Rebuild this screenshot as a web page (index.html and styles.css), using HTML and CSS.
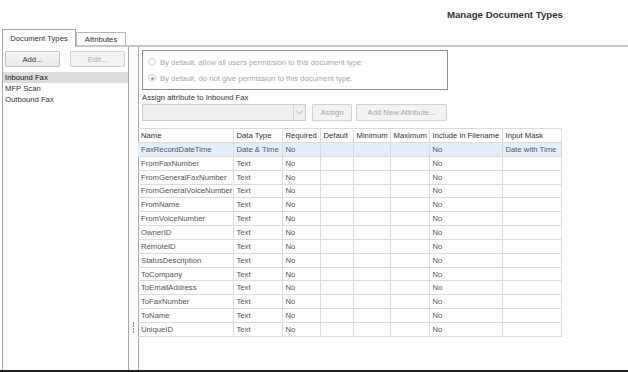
FILE: index.html
```html
<!DOCTYPE html>
<html lang="en">
<head>
  <meta charset="UTF-8" />
  <title>Manage Document Types</title>
  <meta name="viewport" content="width=device-width, initial-scale=1.0" />
  <link rel="stylesheet" href="styles.css">
</head>
<body>
  <div class="page">
    <div class="titlebar">
      <h1>Manage Document Types</h1>
    </div>

    <div class="tabs">
      <div class="tab active">Document Types</div>
      <div class="tab">Attributes</div>
      <div class="tab-rest"></div>
    </div>

    <div class="main">
      <div class="left-panel">
        <div class="left-buttons">
          <button class="btn">Add...</button>
          <button class="btn" disabled>Edit...</button>
        </div>
        <ul class="doc-list">
          <li class="selected">Inbound Fax</li>
          <li>MFP Scan</li>
          <li>Outbound Fax</li>
        </ul>
      </div>

      <div class="splitter">
        <div class="grip"><span></span><span></span><span></span><span></span></div>
      </div>

      <div class="right-panel">
        <div class="perm-box">
          <label class="radio-row"><span class="radio"></span>By default, allow all users permission to this document type</label>
          <label class="radio-row"><span class="radio checked"></span>By default, do not give permission to this document type.</label>
        </div>

        <div class="assign-label">Assign attribute to Inbound Fax</div>
        <div class="assign-row">
          <div class="combo">
            <div class="combo-text"></div>
            <div class="combo-arrow">
              <svg width="7" height="5" viewBox="0 0 7 5"><path d="M0.5 0.8 L3.5 3.8 L6.5 0.8" fill="none" stroke="#b4b4b4" stroke-width="1"/></svg>
            </div>
          </div>
          <button class="btn assign" disabled>Assign</button>
          <button class="btn add-new" disabled>Add New Attribute...</button>
        </div>

        <table class="grid">
          <colgroup>
            <col style="width:95px"><col style="width:49px"><col style="width:38px"><col style="width:33px">
            <col style="width:37px"><col style="width:39px"><col style="width:73px"><col style="width:59px">
          </colgroup>
          <thead>
            <tr>
              <th>Name</th><th>Data Type</th><th>Required</th><th>Default</th>
              <th>Minimum</th><th>Maximum</th><th>Include in Filename</th><th>Input Mask</th>
            </tr>
          </thead>
          <tbody id="gridBody"></tbody>
        </table>
      </div>
    </div>
    <div class="bottom-bar"></div>
  </div>

  <script>
    const attributes = [
      ["FaxRecordDateTime", "Date & Time", "Date with Time"],
      ["FromFaxNumber", "Text", ""],
      ["FromGeneralFaxNumber", "Text", ""],
      ["FromGeneralVoiceNumber", "Text", ""],
      ["FromName", "Text", ""],
      ["FromVoiceNumber", "Text", ""],
      ["OwnerID", "Text", ""],
      ["RemoteID", "Text", ""],
      ["StatusDescription", "Text", ""],
      ["ToCompany", "Text", ""],
      ["ToEmailAddress", "Text", ""],
      ["ToFaxNumber", "Text", ""],
      ["ToName", "Text", ""],
      ["UniqueID", "Text", ""]
    ];

    const body = document.getElementById("gridBody");
    attributes.forEach((a, i) => {
      const tr = document.createElement("tr");
      if (i === 0) tr.className = "selected";
      tr.innerHTML = `
        <td>${a[0].replace("&", "&amp;")}</td>
        <td>${a[1].replace("&", "&amp;")}</td>
        <td>No</td><td></td><td></td><td></td>
        <td>No</td>
        <td>${a[2]}</td>`;
      body.appendChild(tr);
    });
  </script>
</body>
</html>
```

FILE: styles.css
```css
* { box-sizing: border-box; }
html, body { margin: 0; padding: 0; background: #fff; }
body {
  font-family: "Liberation Sans", Arial, sans-serif;
  font-size: 7.7px; color: #444;
}
.page { width: 628px; height: 372px; display: flex; flex-direction: column; overflow: hidden; }

.titlebar {
  height: 29px; display: flex; justify-content: flex-end; align-items: center;
  padding-right: 65px; padding-bottom: 0;
}
.titlebar h1 { margin: 0; font-size: 9.7px; font-weight: bold; color: #333; }

.tabs { display: flex; align-items: flex-end; height: 18px; padding-left: 2px; }
.tab {
  height: 15px; padding: 0 7px; display: flex; align-items: center;
  border: 1px solid #b9b9b9; border-bottom: 2px solid #c8c8c8;
  background: #fff; color: #333; width: 50px; justify-content: center;
}
.tab.active {
  height: 18px; width: 74px; border-color: #a8a8a8; border-bottom: none;
  padding-bottom: 1px;
}
.tab-rest { flex: 1; border-bottom: 2px solid #c8c8c8; height: 2px; }

.main { flex: 1; display: flex; min-height: 0; }

.left-panel {
  margin-left: 2px; width: 127px;
  border-left: 1px solid #a9a9a9; border-right: 1px solid #a9a9a9;
  display: flex; flex-direction: column;
}
.left-buttons { display: flex; gap: 10px; padding: 4px 0 0 2px; height: 25px; }

.btn {
  font-family: inherit; font-size: 7.7px; color: #333;
  background: linear-gradient(#f6f6f6, #e9e9e9);
  border: 1px solid #c4c4c4; border-radius: 1px;
  height: 16px; padding: 0; margin: 0;
}
.btn:disabled { color: #a8a8a8; background: #f3f3f3; border-color: #d2d2d2; }
.left-buttons .btn { width: 55px; }

.doc-list { list-style: none; margin: 0; padding: 0; }
.doc-list li { height: 11px; line-height: 11px; padding-left: 2px; color: #333; }
.doc-list li.selected { background: #dcdcdc; color: #111; }

.splitter { width: 9px; position: relative; }
.grip {
  position: absolute; left: 4px; top: 275px;
  display: flex; flex-direction: column; gap: 1.5px;
}
.grip span { width: 1px; height: 1.5px; background: #8a8a8a; }

.right-panel {
  flex: 1; border-left: 1px solid #a9a9a9;
  display: flex; flex-direction: column;
}

.perm-box {
  margin: 3px 0 0 3px; width: 306px; height: 40px;
  border: 1px solid #8e8e8e;
  display: flex; flex-direction: column; justify-content: center; gap: 5px;
  padding-left: 5px;
}
.radio-row { display: flex; align-items: center; gap: 4px; color: #a8a8a8; height: 11px; }
.radio {
  width: 8px; height: 8px; border-radius: 50%;
  border: 1px solid #d0d0d0; background: #fbfbfb; position: relative;
}
.radio.checked::after {
  content: ""; position: absolute; left: 1.5px; top: 1.5px;
  width: 3px; height: 3px; border-radius: 50%; background: #a0a0a0;
}

.assign-label { margin: 2px 0 0 3px; height: 12px; line-height: 12px; color: #333; }

.assign-row { display: flex; align-items: center; margin: 0 0 0 3px; height: 17px; gap: 6px; }
.combo {
  width: 164px; height: 17px; display: flex;
  border: 1px solid #cfcfcf; background: #efefef;
}
.combo-text { flex: 1; }
.combo-arrow {
  width: 12px; border-left: 1px solid #d2d2d2;
  display: flex; align-items: center; justify-content: center;
}
.assign-row .btn { height: 17px; }
.btn.assign { width: 40px; }
.btn.add-new { width: 91px; margin-left: -2px; }

.grid {
  margin: 7px 0 0 -1px; border-collapse: collapse; table-layout: fixed;
  width: 423px;
}
.grid th, .grid td {
  border: 1px solid #dcdcdc; padding: 0 0 0 3px;
  text-align: left; font-weight: normal; white-space: nowrap; overflow: hidden;
  height: 13.85px;
}
.grid th { height: 14px; color: #333; }
.grid td { color: #555; }
.grid th:first-child, .grid td:first-child { border-left: none; }
.grid tr.selected td { background: #e3eefa; }

.bottom-bar { height: 2px; background: #1e1e1e; }
```
